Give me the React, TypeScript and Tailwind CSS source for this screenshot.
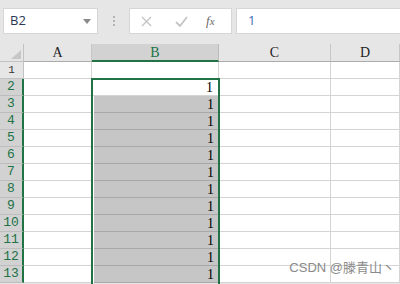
const cols = ["A", "B", "C", "D"];
const rows = [1, 2, 3, 4, 5, 6, 7, 8, 9, 10, 11, 12, 13];

export default function App() {
    return (
        <div className="w-[400px] h-[284px] overflow-hidden bg-[#e6e6e6] relative" style={{ fontFamily: '"Liberation Sans", Arial, sans-serif' }}>
            {/* formula bar */}
            <div className="h-[44px] flex items-start pt-[8px]">
                <div className="ml-[3px] w-[95px] h-[26px] bg-white border border-[#d6d6d6] flex items-center justify-between pl-[6px] pr-[6px]">
                    <span className="text-[13px] text-[#2a3a55]" style={{ fontFamily: '"Open Sans", sans-serif' }}>B2</span>
                    <svg width="8" height="5" viewBox="0 0 8 5"><path d="M0 0h8L4 5z" fill="#8a8a8a" /></svg>
                </div>
                <div className="w-[31px] h-[26px] flex flex-col items-center justify-center gap-[2px]">
                    <span className="w-[2px] h-[2px] bg-[#b4b4b4]"></span>
                    <span className="w-[2px] h-[2px] bg-[#b4b4b4]"></span>
                    <span className="w-[2px] h-[2px] bg-[#b4b4b4]"></span>
                </div>
                <div className="w-[103px] h-[26px] bg-white border border-[#d6d6d6] flex items-center">
                    <svg className="ml-[11px]" width="11" height="11" viewBox="0 0 11 11"><path d="M1 1l9 9M10 1l-9 9" stroke="#c4c4c4" strokeWidth="1.4" /></svg>
                    <svg className="ml-[23px]" width="13" height="11" viewBox="0 0 13 11"><path d="M1 6l4 4 7-9" stroke="#c4c4c4" strokeWidth="1.8" fill="none" /></svg>
                    <span className="ml-[18px] text-[13px] italic text-[#6b6b6b]" style={{ fontFamily: '"Liberation Serif", serif' }}>f<span className="text-[11px]">x</span></span>
                </div>
                <div className="ml-[4px] flex-1 h-[26px] bg-white border border-[#d6d6d6] border-r-0 flex items-center pl-[11px]">
                    <span className="text-[13px] text-[#3b6fb6]" style={{ fontFamily: '"Open Sans", sans-serif' }}>1</span>
                </div>
            </div>

            {/* sheet */}
            <div className="grid grid-cols-[24px_68px_127px_112px_69px] bg-white" style={{ fontFamily: '"Liberation Mono", "DejaVu Sans Mono", monospace' }}>
                <div className="h-[18px] bg-[#e6e6e6] border-r border-b border-[#c2c2c2] flex items-end justify-end pr-[2px] pb-[2px]">
                    <svg width="10" height="9" viewBox="0 0 10 9"><path d="M10 0V9H0z" fill="#c6c6c6" /></svg>
                </div>
                {cols.map((c) => (
                    <div
                        key={c}
                        className={
                            c === "B"
                                ? "h-[18px] bg-[#d2d2d2] border-r border-r-[#bcbcbc] border-b-2 border-b-[#217346] flex items-center justify-center text-[14px] text-[#217346]"
                                : "h-[18px] bg-[#e6e6e6] border-r border-r-[#c6c6c6] border-b border-b-[#ababab] flex items-center justify-center text-[14px] text-[#1e1e1e]"
                        }
                        style={{ fontFamily: '"Liberation Serif", serif' }}
                    >
                        {c}
                    </div>
                ))}

                {rows.map((r) => (
                    <Row key={r} r={r} />
                ))}
            </div>

            {/* selection outline */}
            <div className="absolute left-[91px] top-[78px] w-[129px] h-[220px] border-2 border-[#217346]"></div>

            <div className="absolute right-[5px] bottom-[7px] text-[13px] text-[#8a8a8a]" style={{ fontFamily: '"Liberation Sans", "Noto Sans CJK SC", sans-serif' }}>
                CSDN @滕青山丶
            </div>
        </div>
    );
}

function Row({ r }: { r: number }) {
    const sel = r >= 2;
    return (
        <>
            <div
                className={
                    sel
                        ? "h-[17px] bg-[#d2d2d2] border-r-2 border-r-[#217346] border-b border-b-[#bdbdbd] flex items-center justify-center text-[13px] text-[#217346]"
                        : "h-[17px] bg-[#e6e6e6] border-r border-r-[#c2c2c2] border-b border-b-[#c2c2c2] flex items-center justify-center text-[11px] text-[#333]"
                }
            >
                {r}
            </div>
            <div className="h-[17px] border-r border-b border-[#d4d4d4]"></div>
            {r === 1 && <div className="h-[17px] border-r border-b border-[#d4d4d4]"></div>}
            {r === 2 && (
                <div className="h-[17px] border-r border-b border-[#d4d4d4] flex items-center justify-end pr-[5px] text-[14px] text-black" style={{ fontFamily: '"Liberation Serif", serif' }}>1</div>
            )}
            {r > 2 && (
                <div className="h-[17px] border-r border-[#d4d4d4] pl-[2px]">
                    <div className="h-full bg-[#c6c6c6] border-b border-[#a8a8a8] flex items-center justify-end pr-[4px] text-[14px] text-black" style={{ fontFamily: '"Liberation Serif", serif' }}>1</div>
                </div>
            )}
            <div className="h-[17px] border-r border-b border-[#d4d4d4]"></div>
            <div className="h-[17px] border-r border-b border-[#d4d4d4]"></div>
        </>
    );
}
